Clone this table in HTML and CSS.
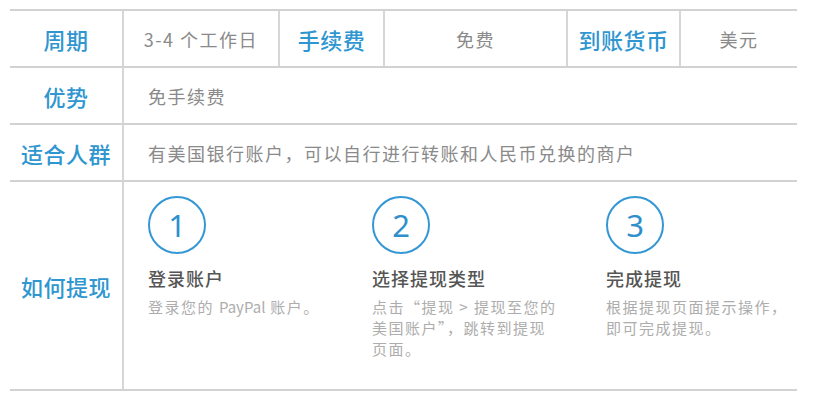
FILE: index.html
```html
<!DOCTYPE html>
<html lang="zh-CN">
<head>
<meta charset="UTF-8">
<meta name="viewport" content="width=device-width, initial-scale=1.0">
<title>提现说明</title>
<link rel="stylesheet" href="styles.css">
</head>
<body>
<div class="info-table">
    <div class="row">
        <div class="cell label">周期</div>
        <div class="cell value center w-period">3-4 个工作日</div>
        <div class="cell label w-fee-label">手续费</div>
        <div class="cell value center w-fee">免费</div>
        <div class="cell label w-cur-label">到账货币</div>
        <div class="cell value center w-cur">美元</div>
    </div>
    <div class="row">
        <div class="cell label">优势</div>
        <div class="cell value wide">免手续费</div>
    </div>
    <div class="row">
        <div class="cell label">适合人群</div>
        <div class="cell value wide">有美国银行账户，可以自行进行转账和人民币兑换的商户</div>
    </div>
    <div class="row steps-row">
        <div class="cell label">如何提现</div>
        <div class="cell wide steps">
            <div class="step">
                <div class="step-num">1</div>
                <div class="step-title">登录账户</div>
                <div class="step-desc">登录您的 <span class="latin">PayPal</span> 账户。</div>
            </div>
            <div class="step">
                <div class="step-num">2</div>
                <div class="step-title">选择提现类型</div>
                <div class="step-desc">点击“提现 &gt; 提现至您的美国账户”，跳转到提现页面。</div>
            </div>
            <div class="step">
                <div class="step-num">3</div>
                <div class="step-title">完成提现</div>
                <div class="step-desc">根据提现页面提示操作，即可完成提现。</div>
            </div>
        </div>
    </div>
</div>
</body>
</html>
```

FILE: styles.css
```css
body {
    margin: 0;
    background-color: #ffffff;
    font-family: "Noto Sans CJK SC", "Noto Sans", sans-serif;
}
.info-table {
    width: 787px;
    margin: 9px 0 0 10px;
    border-top: 2px solid #d2d2d2;
}
.row {
    display: flex;
    height: 57px;
    border-bottom: 2px solid #d2d2d2;
    box-sizing: border-box;
}
.steps-row {
    height: 209px;
}
.cell {
    display: flex;
    align-items: center;
    flex-shrink: 0;
    box-sizing: border-box;
}
.cell + .cell {
    border-left: 2px solid #d6d6d6;
}
.label {
    width: 112px;
    justify-content: center;
    color: #2f96d0;
    font-size: 22px;
    font-weight: 500;
    letter-spacing: 0.5px;
}
.value {
    color: #8a8a8a;
    font-size: 18px;
    letter-spacing: 1.5px;
}
.center {
    justify-content: center;
}
.w-period { width: 156px; }
.w-fee-label { width: 105px; }
.w-fee { width: 183px; }
.w-cur-label { width: 113px; }
.w-cur { width: 118px; }
.wide {
    flex: 1;
    padding-left: 24px;
}
.steps {
    align-items: flex-start;
    padding-top: 14px;
}
.step {
    width: 224px;
}
.step:nth-child(2) {
    width: 234px;
}
.step-num {
    width: 54px;
    height: 54px;
    border: 2px solid #3597d3;
    border-radius: 50%;
    color: #2f8fcc;
    font-family: "Noto Sans", sans-serif;
    font-size: 31px;
    display: flex;
    align-items: center;
    justify-content: center;
}
.step-title {
    margin-top: 11px;
    line-height: 26px;
    color: #555555;
    font-size: 18px;
    font-weight: 500;
    letter-spacing: 1px;
}
.step-desc {
    margin-top: 5px;
    width: 188px;
    line-height: 21px;
    color: #adadad;
    font-size: 15px;
    letter-spacing: 1.5px;
}
.latin {
    letter-spacing: 0;
}
```
